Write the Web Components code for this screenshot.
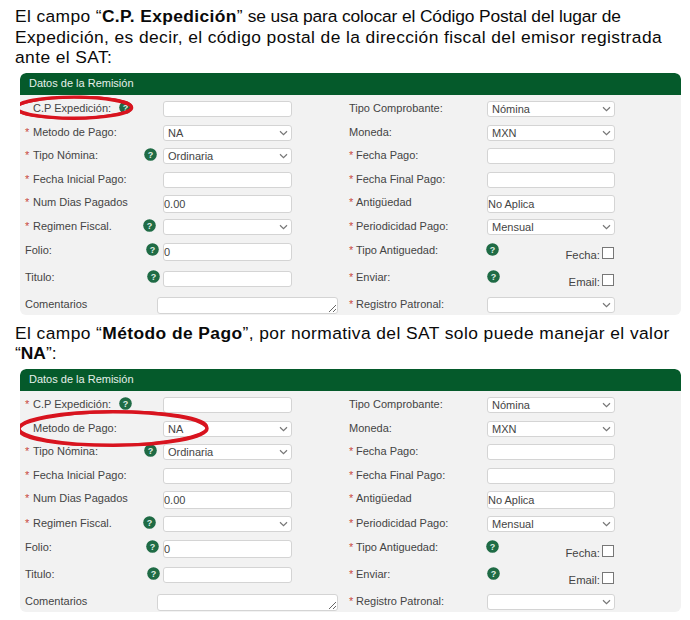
<!DOCTYPE html>
<html lang="es">
<head>
<meta charset="utf-8">
<title>Datos de la Remisión</title>
<style>
  html, body { margin: 0; background: #fff; }
  body { width: 690px; height: 620px; overflow: hidden; font-family: "Liberation Sans", Arial, sans-serif; }
  .wide-line { letter-spacing: .4px; }
  .first-a { letter-spacing: .38px; }
  .first-b { letter-spacing: -.12px; }
  .first-line, .line { display: block; }
</style>
</head>
<body>
<doc-page>
  <doc-text>
    <span class="first-line"><span class="first-a">El campo “<b>C.P. Expedición</b>”</span><span class="first-b"> se usa para colocar el Código Postal del lugar de</span></span>
    <span class="line wide-line">Expedición, es decir, el código postal de la dirección fiscal del emisor registrada</span>
    <span class="line wide-line">ante el SAT:</span>
  </doc-text>
  <remision-panel rows="24 23 24 23 24 24 28 26 18" marked="cp" titulo-top="-1"
    fecha-top="4" email-top="3" mark="54 34.7 57.6 10.6"></remision-panel>
  <doc-text style="--top: 8px">
    <span class="line" style="letter-spacing:.42px">El campo “<b>Método de Pago</b>”, por normativa del SAT solo puede manejar el valor</span>
    <span class="line">“<b>NA</b>”:</span>
  </doc-text>
  <remision-panel rows="24 23 24 23 25 24 27 27 18" marked="metodo" titulo-top="0"
    fecha-top="5" email-top="5" mark="93 59.5 94 16.7"></remision-panel>
</doc-page>

<script>
// Page wrapper
class DocPage extends HTMLElement {
  constructor() {
    super();
    this.attachShadow({ mode: 'open' });
    this.shadowRoot.innerHTML = `
      <style>
        :host { display: block; padding: 6px 9px 0 15px; }
      </style>
      <slot></slot>
    `;
  }
}

// Paragraph above each panel
class DocText extends HTMLElement {
  constructor() {
    super();
    this.attachShadow({ mode: 'open' });
    this.shadowRoot.innerHTML = `
      <style>
        :host {
          display: block;
          margin: var(--top, 0) 0 5px;
          font-size: 17.4px;
          line-height: 20.5px;
          color: #0a0a0a;
          white-space: nowrap;
        }
      </style>
      <slot></slot>
    `;
  }
}

// Green help bubble
class HelpIcon extends HTMLElement {
  constructor() {
    super();
    this.attachShadow({ mode: 'open' });
    this.shadowRoot.innerHTML = `
      <style>
        :host { display: block; width: 13px; height: 13px; }
        svg { display: block; }
        text { font: bold 9px "Liberation Sans", Arial, sans-serif; fill: #dfeee4; }
      </style>
      <svg width="13" height="13" viewBox="0 0 13 13" aria-hidden="true">
        <circle cx="6.5" cy="6.5" r="6.3" fill="#1f6b45"/>
        <text x="6.5" y="9.8" text-anchor="middle">?</text>
      </svg>
    `;
  }
}

// One label + optional help icon; help attr is the icon's left edge inside the cell
class FieldLabel extends HTMLElement {
  constructor() {
    super();
    this.attachShadow({ mode: 'open' });
  }

  connectedCallback() {
    const help = this.getAttribute('help');
    const top = this.getAttribute('top') || '0';
    let req = '';
    if (this.hasAttribute('required')) req = '<span class="req">*</span>';
    // the red pen mark covers the asterisk on the circled row
    if (this.hasAttribute('covered')) req = '<span class="req"></span>';
    this.shadowRoot.innerHTML = `
      <style>
        :host {
          display: block;
          position: relative;
          height: 17px;
          font-size: 11px;
          line-height: 14px;
          color: #444;
          white-space: nowrap;
        }
        .req { color: #c9483f; display: inline-block; width: var(--req, 8px); }
        help-icon { position: absolute; left: ${help}px; top: 0; }
      </style>
      ${req}<slot></slot>
      ${help ? '<help-icon></help-icon>' : ''}
    `;
    this.style.marginTop = top + 'px';
  }
}

// Text input
class FieldInput extends HTMLElement {
  constructor() {
    super();
    this.attachShadow({ mode: 'open' });
  }

  connectedCallback() {
    const h = this.getAttribute('h') || '16';
    const value = this.getAttribute('value') || '';
    this.shadowRoot.innerHTML = `
      <style>
        :host { display: block; }
        input {
          display: block;
          box-sizing: border-box;
          width: 100%;
          height: ${h}px;
          margin: 0;
          padding: 0;
          border: 1px solid #d4d4d4;
          border-radius: 3px;
          background: #fff;
          font: 11px "Liberation Sans", Arial, sans-serif;
          color: #444;
        }
      </style>
      <input type="text" value="${value}">
    `;
  }
}

// Select with the small chevron
class FieldSelect extends HTMLElement {
  constructor() {
    super();
    this.attachShadow({ mode: 'open' });
  }

  connectedCallback() {
    const value = this.getAttribute('value') || '';
    this.shadowRoot.innerHTML = `
      <style>
        :host { display: block; position: relative; }
        select {
          display: block;
          box-sizing: border-box;
          width: 100%;
          height: 16px;
          margin: 0;
          padding: 0 0 0 4px;
          border: 1px solid #d4d4d4;
          border-radius: 3px;
          background: #fff;
          appearance: none;
          opacity: 1;
          font: 11px "Liberation Sans", Arial, sans-serif;
          color: #444;
        }
        svg { position: absolute; right: 4px; top: 5px; }
      </style>
      <select><option>${value}</option></select>
      <svg width="9" height="6" viewBox="0 0 9 6" aria-hidden="true">
        <path d="M1 1.2 4.5 4.6 8 1.2" fill="none" stroke="#777" stroke-width="1.2"/>
      </svg>
    `;
  }
}

// Right aligned "Fecha: []" checkbox
class FieldCheck extends HTMLElement {
  constructor() {
    super();
    this.attachShadow({ mode: 'open' });
  }

  connectedCallback() {
    const top = this.getAttribute('top') || '0';
    this.shadowRoot.innerHTML = `
      <style>
        :host {
          display: flex;
          justify-content: flex-end;
          align-items: flex-start;
          gap: 2px;
          padding: ${top}px 1px 0 0;
          font-size: 11.3px;
          line-height: 13px;
          color: #444;
        }
        .txt { display: block; margin-top: 2px; }
        .box { display: block; box-sizing: border-box; width: 12px; height: 12px; border: 1px solid #777; background: #fff; }
      </style>
      <span class="txt"><slot></slot></span><span class="box"></span>
    `;
  }
}

// The whole "Datos de la Remisión" card
class RemisionPanel extends HTMLElement {
  constructor() {
    super();
    this.attachShadow({ mode: 'open' });
  }

  connectedCallback() {
    const rows = this.getAttribute('rows').split(' ').map(r => r + 'px').join(' ');
    const [cx, cy, rx, ry] = this.getAttribute('mark').split(' ');
    const marked = this.getAttribute('marked');
    const cp = marked === 'cp' ? 'covered' : 'required';
    const metodo = marked === 'metodo' ? 'covered' : 'required';
    const tituloTop = this.getAttribute('titulo-top');
    this.shadowRoot.innerHTML = `
      <style>
        :host {
          display: block;
          position: relative;
          width: 661px;
          margin-left: 5px;
          border-radius: 6px;
          background: #f2f2f2;
          overflow: hidden;
        }
        header {
          height: 22px;
          padding-left: 9px;
          background: #055a2b;
          border-radius: 6px 6px 0 0;
          color: #e6f0ea;
          font-size: 11px;
          line-height: 21px;
        }
        .grid {
          display: grid;
          grid-template-columns: 138px 129px 57px 138px 128px;
          grid-template-rows: ${rows};
          padding: 6px 0 0 5px;
          align-items: start;
        }
        .gap { grid-column: 3; }
        .right { --req: 7px; }
        .wide { margin-left: -6px; width: 181px; }
        .wide textarea {
          display: block;
          box-sizing: border-box;
          width: 100%;
          height: 17px;
          margin: 0;
          padding: 0;
          border: 1px solid #d4d4d4;
          border-radius: 3px;
          background: #fff;
          resize: both;
        }
        .mark { position: absolute; left: 0; top: 0; pointer-events: none; }
      </style>
      <header>Datos de la Remisión</header>
      <div class="grid">
        <field-label ${cp} help="94">C.P Expedición:</field-label>
        <field-input></field-input><i class="gap"></i>
        <field-label class="right">Tipo Comprobante:</field-label>
        <field-select value="Nómina"></field-select>

        <field-label ${metodo}>Metodo de Pago:</field-label>
        <field-select value="NA"></field-select><i class="gap"></i>
        <field-label class="right">Moneda:</field-label>
        <field-select value="MXN"></field-select>

        <field-label required help="119">Tipo Nómina:</field-label>
        <field-select value="Ordinaria"></field-select><i class="gap"></i>
        <field-label class="right" required>Fecha Pago:</field-label>
        <field-input></field-input>

        <field-label required>Fecha Inicial Pago:</field-label>
        <field-input></field-input><i class="gap"></i>
        <field-label class="right" required>Fecha Final Pago:</field-label>
        <field-input></field-input>

        <field-label required>Num Dias Pagados</field-label>
        <field-input h="18" value="0.00"></field-input><i class="gap"></i>
        <field-label class="right" required>Antigüedad</field-label>
        <field-input h="18" value="No Aplica"></field-input>

        <field-label required help="118">Regimen Fiscal.</field-label>
        <field-select></field-select><i class="gap"></i>
        <field-label class="right" required>Periodicidad Pago:</field-label>
        <field-select value="Mensual"></field-select>

        <field-label help="121">Folio:</field-label>
        <field-input h="18" value="0"></field-input><i class="gap"></i>
        <field-label class="right" required help="137">Tipo Antiguedad:</field-label>
        <field-check top="${this.getAttribute('fecha-top')}">Fecha:</field-check>

        <field-label help="122" top="${tituloTop}">Titulo:</field-label>
        <field-input></field-input><i class="gap"></i>
        <field-label class="right" required help="138" top="${tituloTop}">Enviar:</field-label>
        <field-check top="${this.getAttribute('email-top')}">Email:</field-check>

        <field-label>Comentarios</field-label>
        <div class="wide"><textarea></textarea></div><i class="gap"></i>
        <field-label class="right" required>Registro Patronal:</field-label>
        <field-select></field-select>
      </div>
      <svg class="mark" width="661" height="243" aria-hidden="true">
        <g fill="none" stroke="#d8141f">
          <ellipse cx="${cx}" cy="${cy}" rx="${rx}" ry="${ry}" stroke-width="3.4"/>
          <ellipse cx="${cx}" cy="${cy}" rx="${rx}" ry="${ry}" stroke-width="2.4" transform="rotate(-1 ${cx} ${cy})"/>
        </g>
      </svg>
    `;
  }
}

customElements.define('help-icon', HelpIcon);
customElements.define('field-label', FieldLabel);
customElements.define('field-input', FieldInput);
customElements.define('field-select', FieldSelect);
customElements.define('field-check', FieldCheck);
customElements.define('doc-page', DocPage);
customElements.define('doc-text', DocText);
customElements.define('remision-panel', RemisionPanel);
</script>
</body>
</html>
